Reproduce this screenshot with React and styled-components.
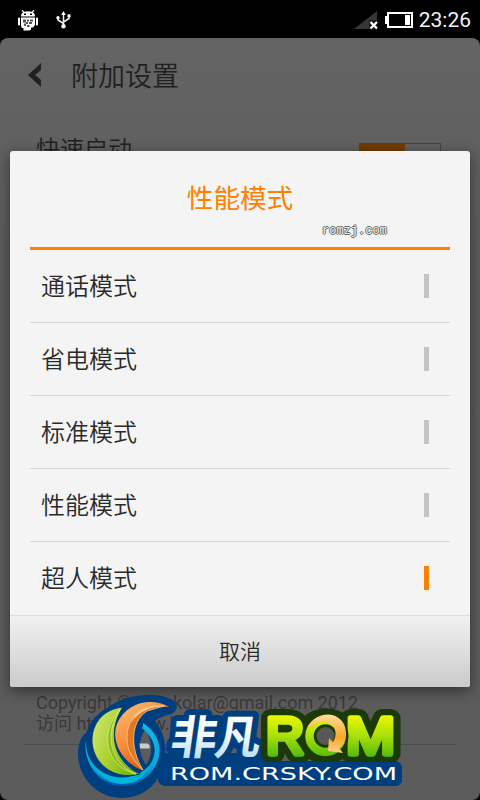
import React from 'react';
import styled, { createGlobalStyle } from 'styled-components';

const MODES = ['通话模式', '省电模式', '标准模式', '性能模式', '超人模式'];

const AndroidIcon = () => (
  <svg width="20" height="21" viewBox="0 0 20 21">
    <g fill="#fff">
      <path d="M3 6.500C3 4 4 2.800 5 2.400L3.600 0.600L4.600 0L6.300 1.800Q10 0.800 13.700 1.800L15.400 0L16.400 0.600L15 2.400C16 2.800 17 4 17 6.500Z" />
      <rect x="0" y="7.500" width="2" height="8" rx="0.800" />
      <rect x="18" y="7.500" width="2" height="8" rx="0.800" />
      <path d="M3 7.500h14v7.500l-2 2.500h-2v2l-1.500 1h-6v-2.500H4l-1-2z" />
    </g>
    <path d="M6 3.500h2v1.500H6zM12 3.500h2v1.500h-2z" fill="#000" />
    <path
      d="M5 9.500h3v3H5zM9 9.500h2v2H9zM12 9.500h3v2h-3zM8 12h2v2H8zM11 12h3v2h-3zM6 13.500h2v2.500H6zM9 15h2.500v2H9z"
      fill="#555"
    />
  </svg>
);

const UsbIcon = () => (
  <svg width="15" height="18" viewBox="0 0 15 18">
    <path
      d="M7.5 2v12M7.5 12.5L2 9V6.5M7.5 11L13 7.5V5"
      stroke="#eee"
      strokeWidth="1.5"
      fill="none"
    />
    <path d="M7.5 0L9.8 4H5.200z" fill="#fff" />
    <circle cx="7.5" cy="15.200" r="2.2" fill="#fff" />
    <circle cx="2" cy="6.8" r="1.7" fill="#fff" />
    <path d="M11.5 3.300h3v3h-3z" fill="#fff" />
  </svg>
);

const SignalIcon = () => (
  <svg width="25" height="19" viewBox="0 0 25 19">
    <path d="M23 0v18H0z" fill="#363636" />
    <path d="M15 9h10v10H15z" fill="#000" opacity="0.5" />
    <path d="M16.5 11l6.5 6.5M23 11l-6.5 6.5" stroke="#fff" strokeWidth="2.2" />
  </svg>
);

const BatteryIcon = () => (
  <svg width="28" height="16" viewBox="0 0 28 16">
    <path d="M3 1h24v14H3z" fill="none" stroke="#fff" strokeWidth="2" />
    <path d="M0 4h3v8H0zM20 3h5v10h-5z" fill="#fff" />
  </svg>
);

const BackIcon = () => (
  <svg width="14" height="26" viewBox="0 0 14 26">
    <path d="M13 1v7L7 13l6 5v7L0 13z" fill="#202020" />
  </svg>
);

const Logo = () => (
  <LogoSvg viewBox="76 690 332 110">
    <defs>
      <linearGradient id="green" x1="0" y1="0" x2="1" y2="0.5">
        <stop offset="0" stopColor="#d5ea78" />
        <stop offset="0.6" stopColor="#a8cf2c" />
        <stop offset="1" stopColor="#79b510" />
      </linearGradient>
      <linearGradient id="orange" x1="0" y1="0" x2="0.6" y2="1">
        <stop offset="0" stopColor="#ffc17c" />
        <stop offset="0.55" stopColor="#f58a35" />
        <stop offset="1" stopColor="#d9540b" />
      </linearGradient>
      <linearGradient id="cyan" x1="0" y1="0" x2="0" y2="1">
        <stop offset="0" stopColor="#12b6e8" />
        <stop offset="0.7" stopColor="#0aa5da" />
        <stop offset="1" stopColor="#0565ba" />
      </linearGradient>
      <linearGradient id="ice" gradientUnits="userSpaceOnUse" x1="0" y1="-40" x2="0" y2="4">
        <stop offset="0" stopColor="#fff" />
        <stop offset="0.5" stopColor="#eef8fe" />
        <stop offset="1" stopColor="#b9dff5" />
      </linearGradient>
      <linearGradient id="lime" gradientUnits="userSpaceOnUse" x1="0" y1="714" x2="0" y2="758">
        <stop offset="0" stopColor="#f0fa00" />
        <stop offset="0.5" stopColor="#a8e00a" />
        <stop offset="1" stopColor="#4fb80e" />
      </linearGradient>
      <linearGradient id="gold" x1="0" y1="0" x2="0" y2="1">
        <stop offset="0" stopColor="#ffdc9a" />
        <stop offset="0.6" stopColor="#f7a928" />
        <stop offset="1" stopColor="#ffd08a" />
      </linearGradient>
    </defs>

    <g fill="#003f7f">
      <path d="M107 708C122 696 151 691 168 698C178 701 180 710 171 714C164 716 158 718 155 721C163 730 167 744 165 759C161 783 144 798 122 798C98 798 79 779 78 755C78 744 81 736 86 733C90 722 97 713 107 708Z" />
      <rect x="158" y="761" width="244" height="25" rx="7" />
      <path d="M160 753h106v14h-106z" />
    </g>
    <path d="M145 730C138 740 138 753 146 765C153 756 153 740 145 730Z" fill="#5c5c5c" />
    <path d="M139.500 743.500h8q3 2 2 5h-9.500z" fill="#c8cdd2" />
    <path
      d="M86 740C82 760 98 786 122 786C147 786 163 762 159 745C157 735 151 728 143 723C143 726 143 727 142 728C155 739 158 751 151 763C139 783 103 783 90 759C87 753 86 748 86 740Z"
      fill="url(#cyan)"
    />
    <path d="M91 762C103 780 132 784 149 766C138 794 104 789 91 762Z" fill="#00b5dc" />
    <path d="M105 780C118 786 132 785 142 778C130 789 115 788 105 780Z" fill="#0654ae" />
    <path
      d="M123 707C103 709 91 724 92 743C94 764 114 781 140 774C115 762 106 734 123 707Z"
      fill="url(#green)"
      stroke="#003f7f"
      strokeWidth="1"
    />
    <path
      d="M120 709C98 735 107 767 136 774C111 764 103 735 120 709Z"
      fill="#88be17"
      stroke="#dcee95"
      strokeWidth="0.7"
    />
    <path
      d="M169 707C152 697 126 702 117 724C110 743 124 764 144 771C128 753 125 724 145 711C152 707 160 706 169 707Z"
      fill="url(#orange)"
    />
    <path
      d="M164 706C137 705 128 718 127 737C126 751 136 764 143 770C130 749 130 722 147 711Z"
      fill="#e27725"
      stroke="#ffd7a4"
      strokeWidth="0.7"
    />
    <path d="M166 706C142 704 134 715 131 723C138 712 150 706 166 706Z" fill="#ffd09a" />

    <LogoHan
      transform="translate(169 754) skewX(-8)"
      textLength="90"
      fill="#003f7f"
      stroke="#003f7f"
      strokeWidth="12"
    >
      非凡
    </LogoHan>
    <g fill="#1c3a05" stroke="#1c3a05" strokeWidth="18">
      <LogoLatin x="266" y="754" textLength="38">R</LogoLatin>
      <LogoLatin x="304" y="754" textLength="44">O</LogoLatin>
      <LogoLatin x="346" y="754" textLength="49">M</LogoLatin>
    </g>
    <rect x="230" y="762" width="172" height="24" rx="7" fill="#003f7f" />
    <LogoHan transform="translate(169 754) skewX(-8)" textLength="90" fill="url(#ice)">
      非凡
    </LogoHan>
    <g fill="url(#lime)" stroke="url(#lime)" strokeWidth="5.5">
      <LogoLatin x="266" y="753.500" textLength="38">R</LogoLatin>
      <LogoLatin x="346" y="753.500" textLength="49">M</LogoLatin>
    </g>
    <circle cx="325.500" cy="736" r="16" fill="#585858" stroke="#1c3a05" strokeWidth="14" />
    <circle cx="325.500" cy="736" r="16" fill="none" stroke="url(#lime)" strokeWidth="8.500" />
    <path
      d="M308 727C317 710 340 711 345 727C348 738 344 745 339 748L343 753L328 751L329 738L333 742C338 735 336 724 326 722C319 721 315 723 312 727Z"
      fill="url(#gold)"
    />
    <LogoUrl x="170" y="780" textLength="227">
      ROM.CRSKY.COM
    </LogoUrl>
  </LogoSvg>
);

const App = () => {
  const selected = 4;

  return (
    <Screen>
      <GlobalStyle />
      <StatusBar>
        <StatusGroup $gap={18}>
          <AndroidIcon />
          <UsbIcon />
        </StatusGroup>
        <StatusGroup $gap={6}>
          <SignalIcon />
          <BatteryIcon />
          <Clock>23:26</Clock>
        </StatusGroup>
      </StatusBar>

      <Page>
        <PageHeader>
          <BackIcon />
          <PageTitle>附加设置</PageTitle>
        </PageHeader>
        <SettingRow>
          <span>快速启动</span>
          <Switch />
        </SettingRow>
        <Footer>
          <span>Copyright © alex.kolar@gmail.com 2012</span>
          <span>访问 http://www.kolar</span>
        </Footer>
      </Page>

      <Dialog>
        <DialogTitle>性能模式</DialogTitle>
        <List>
          {MODES.map((mode, i) => (
            <Item key={mode}>
              <Label>{mode}</Label>
              <Mark $active={i === selected} />
            </Item>
          ))}
        </List>
        <CancelButton type="button">取消</CancelButton>
      </Dialog>

      <Watermark>romzj.com</Watermark>
      <Logo />
    </Screen>
  );
};

export default App;

//styling
const GlobalStyle = createGlobalStyle`
  * {
    box-sizing: border-box;
  }
  body {
    margin: 0;
    background: #000;
    font-family: Roboto, 'Noto Sans CJK SC', sans-serif;
  }
`;

const Screen = styled.div`
  position: relative;
  display: flex;
  flex-direction: column;
  width: 480px;
  height: 800px;
  overflow: hidden;
  background: #000;
`;

const StatusBar = styled.div`
  display: flex;
  align-items: center;
  justify-content: space-between;
  height: 38px;
  padding: 2px 9px 0 18px;
`;

const StatusGroup = styled.div`
  display: flex;
  align-items: center;
  gap: ${({ $gap }) => $gap}px;
`;

const Clock = styled.span`
  font-size: 21px;
  line-height: 24px;
  color: #f2f2f2;
`;

const Page = styled.div`
  display: flex;
  flex: 1;
  flex-direction: column;
  border-radius: 8px;
  background: linear-gradient(#646464, #5a5a5a 35%, #5c5c5c);
  color: #202020;
`;

const PageHeader = styled.div`
  display: flex;
  align-items: center;
  gap: 29px;
  height: 73px;
  padding-left: 28px;
`;

const PageTitle = styled.div`
  padding-top: 4px;
  font-size: 27px;
  font-weight: 350;
  line-height: 40px;
`;

const SettingRow = styled.div`
  display: flex;
  align-items: center;
  justify-content: space-between;
  height: 73px;
  padding: 0 39px 0 36px;
  font-size: 24px;
  font-weight: 350;
`;

const Switch = styled.div`
  width: 82px;
  height: 26px;
  margin-top: 16px;
  border: 1px solid #424242;
  background: linear-gradient(90deg, #713b00 45px, #606060 45px);
`;

const Footer = styled.div`
  display: flex;
  flex-direction: column;
  height: 53px;
  margin: auto 24px 55px;
  padding-left: 12px;
  border-bottom: 1px solid #4c4c4c;
  font-size: 18px;
  letter-spacing: -0.02px;
  line-height: 21px;
  color: #393939;
`;

const Dialog = styled.div`
  position: absolute;
  top: 151px;
  left: 10px;
  display: flex;
  flex-direction: column;
  width: 460px;
  height: 536px;
  border-radius: 3px;
  background: #f4f4f4;
  box-shadow: 0 4px 14px rgba(0, 0, 0, 0.45);
  overflow: hidden;
`;

const DialogTitle = styled.div`
  height: 99px;
  margin: 0 20px;
  border-bottom: 3px solid #ff8000;
  font-size: 26.6px;
  line-height: 96px;
  text-align: center;
  color: #ff8000;
`;

const List = styled.div`
  display: flex;
  flex-direction: column;
  height: 365px;
  padding: 0 20px;
`;

const Item = styled.div`
  display: flex;
  align-items: center;
  justify-content: space-between;
  height: 73px;
  padding: 0 21px 0 11px;
  border-bottom: 1px solid #d6d6d6;
  font-size: 24px;
  color: #2a2a2a;
  &:last-child {
    border-bottom-color: transparent;
  }
`;

const Label = styled.span`
  padding-bottom: 3px;
  font-weight: 350;
`;

const Mark = styled.span`
  width: 5px;
  height: 24px;
  background: ${({ $active }) => ($active ? '#ff8000' : '#c4c4c4')};
`;

const CancelButton = styled.button`
  height: 72px;
  padding: 0 0 4px;
  border: none;
  border-top: 1px solid #dedede;
  background: linear-gradient(#f1f1f1, #cbcbcb);
  font-family: inherit;
  font-size: 21px;
  font-weight: 350;
  color: #2a2a2a;
`;

const Watermark = styled.div`
  position: absolute;
  top: 223px;
  left: 322px;
  font-family: 'Liberation Mono', monospace;
  font-size: 12px;
  line-height: 16px;
  color: #f4f4f4;
  text-shadow: 1px 0 #666, -1px 0 #666, 0 1px #666, 0 -1px #666;
`;

const LogoSvg = styled.svg`
  position: absolute;
  top: 690px;
  left: 76px;
  width: 332px;
  height: 110px;
`;

const LogoHan = styled.text`
  font-family: 'Noto Sans CJK SC', sans-serif;
  font-size: 46px;
  font-weight: 700;
  stroke-linejoin: round;
`;

const LogoLatin = styled.text.attrs({ lengthAdjust: 'spacingAndGlyphs' })`
  font-family: 'Liberation Sans', sans-serif;
  font-size: 51px;
  stroke-linejoin: round;
`;

const LogoUrl = styled.text.attrs({ lengthAdjust: 'spacingAndGlyphs' })`
  font-family: 'DejaVu Sans', sans-serif;
  font-size: 18px;
  fill: #fff;
`;
